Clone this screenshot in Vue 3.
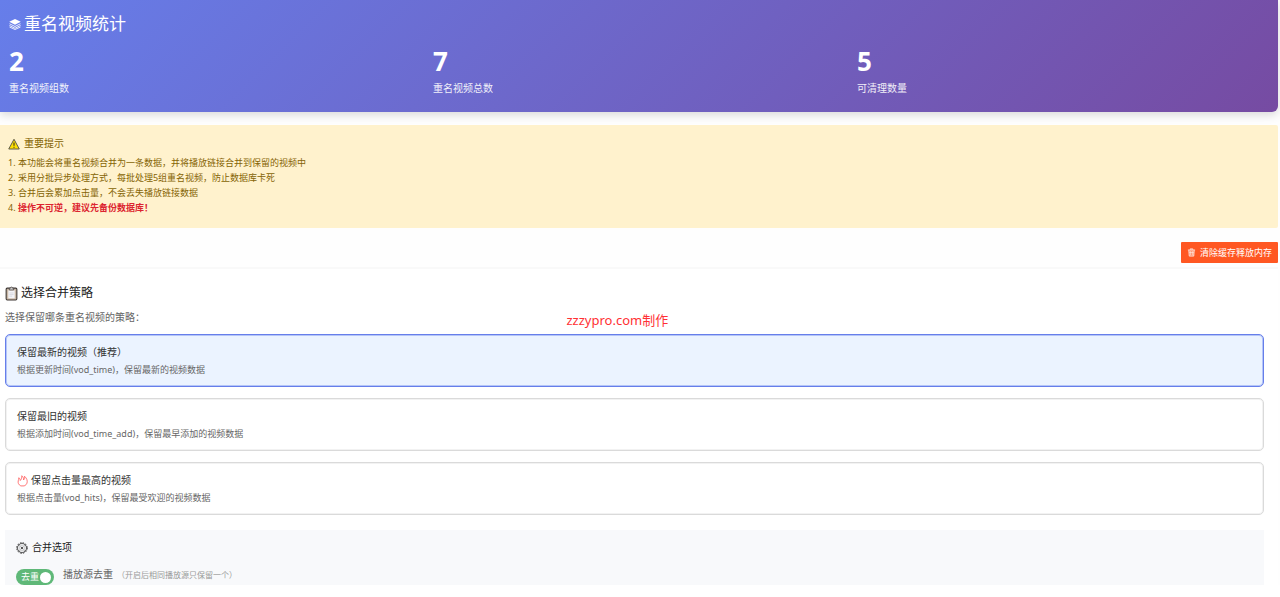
<script setup>
import { ref } from 'vue'

const stats = [
  { value: 2, label: '重名视频组数' },
  { value: 7, label: '重名视频总数' },
  { value: 5, label: '可清理数量' },
]

const notes = [
  { text: '本功能会将重名视频合并为一条数据，并将播放链接合并到保留的视频中' },
  { text: '采用分批异步处理方式，每批处理5组重名视频，防止数据库卡死' },
  { text: '合并后会累加点击量，不会丢失播放链接数据' },
  { text: '操作不可逆，建议先备份数据库！', danger: true },
]

const strategies = [
  { id: 'newest', title: '保留最新的视频（推荐）', desc: '根据更新时间(vod_time)，保留最新的视频数据' },
  { id: 'oldest', title: '保留最旧的视频', desc: '根据添加时间(vod_time_add)，保留最早添加的视频数据' },
  { id: 'hits', title: '保留点击量最高的视频', desc: '根据点击量(vod_hits)，保留最受欢迎的视频数据', hot: true },
]

const selected = ref('newest')
const dedupe = ref(true)
</script>

<template>
  <main class="page">
    <section class="stats">
      <h1 class="stats-title">
        <svg class="icon-layers" viewBox="0 0 24 24" aria-hidden="true">
          <path d="M12 2 23.500 7.500 12 13.500.500 7.500Z" fill="currentColor" />
          <path d="m1 11.500 11 5.500 11-5.500M1 15l11 5.500L23 15M1 18l11 5 11-5" fill="none" stroke="currentColor" stroke-width="1.700" />
        </svg>
        重名视频统计
      </h1>
      <div class="stats-grid">
        <div v-for="s in stats" :key="s.label">
          <div class="stat-value">{{ s.value }}</div>
          <div class="stat-label">{{ s.label }}</div>
        </div>
      </div>
    </section>

    <section class="notice">
      <h2 class="notice-title">
        <svg class="icon-warning" viewBox="0 0 24 24" aria-hidden="true">
          <path d="M12 2.500 22.500 22h-21Z" fill="#ffe000" stroke="#5c5a4c" stroke-width="2" stroke-linejoin="round" />
          <path d="M12 9v6.500M12 17.500v2" stroke="#222" stroke-width="2" />
        </svg>
        重要提示
      </h2>
      <div v-for="(n, i) in notes" :key="i" class="note">
        {{ i + 1 }}. <strong v-if="n.danger">{{ n.text }}</strong><template v-else>{{ n.text }}</template>
      </div>
    </section>

    <div class="toolbar">
      <button type="button" class="clear">
        <svg class="icon-trash" viewBox="0 0 20 20" aria-hidden="true">
          <path d="M2 4.500h16M7 4V2h6v2M4 5l1 13h10l1-13" fill="#ffb59c" fill-opacity=".6" stroke="#ffe3da" stroke-width="2" />
          <path d="M8 7v9M12 7v9M5 10h10" stroke="#ffe3da" stroke-width="1.500" />
        </svg>
        清除缓存释放内存
      </button>
    </div>

    <section class="panel">
      <h2 class="panel-title">
        <svg class="icon-clipboard" viewBox="0 0 24 28" aria-hidden="true">
          <rect x="2" y="4" width="20" height="22" rx="2" fill="#c9b8a6" stroke="#3c3532" stroke-width="2" />
          <path d="M6 8h12v15H6Z" fill="#f4f4f8" />
          <path d="M8 4h2a2 2 0 0 1 4 0h2v3.500H8Z" fill="#ccc" stroke="#4a4341" stroke-width="1.400" />
          <path d="M8 13h8M8 16h8M8 19h5" stroke="#c4c4cc" />
        </svg>
        选择合并策略
      </h2>
      <div class="intro">
        <p>选择保留哪条重名视频的策略：</p>
        <span class="watermark">zzzypro.com制作</span>
      </div>

      <div class="strategies" role="radiogroup" aria-label="选择合并策略">
        <label v-for="s in strategies" :key="s.id" class="strategy" :class="{ active: selected === s.id }">
          <input v-model="selected" class="hidden-input" type="radio" name="strategy" :value="s.id">
          <span class="strategy-title">
            <svg v-if="s.hot" class="icon-fire" viewBox="0 0 22 24" fill="none" stroke="#ff6060" stroke-width="1.700" stroke-linejoin="round" stroke-linecap="round" aria-hidden="true">
              <path d="M7 21.500C3 19.500 1.500 15.500 2.500 11.500 3 9.500 4 8 3.500 5.500 5.500 6.500 6.500 8.500 6.500 11 9 8.500 10 5 9.500 1.500c3 2 4 5 3.500 8.500 1.500-1.500 2.500-4 2-7.500 4.500 4 6.500 9 5 13.500-.8 2.500-2.500 4.500-5 5.500Z" />
            </svg>
            {{ s.title }}
          </span>
          <span class="strategy-desc">{{ s.desc }}</span>
        </label>
      </div>

      <div class="options">
        <h3 class="options-title">
          <svg class="icon-gear" viewBox="0 0 24 24" fill="none" stroke="#333" aria-hidden="true">
            <circle cx="12" cy="12" r="10.500" stroke-width="2" stroke-dasharray="3.200 2.298" />
            <circle cx="12" cy="12" r="9" stroke-width="1.600" />
            <circle cx="12" cy="12" r="5.500" stroke="#aaa" />
            <circle cx="12" cy="12" r="1.800" fill="#333" />
            <path d="m6 6 3.500 3.500M18 6l-3.500 3.500M6 18l3.500-3.500M18 18l-3.500-3.500" stroke="#888" />
          </svg>
          合并选项
        </h3>
        <label class="option">
          <input v-model="dedupe" class="hidden-input" type="checkbox">
          <span class="switch" :class="{ off: !dedupe }">去重<i class="knob"></i></span>
          <span class="option-label">播放源去重</span>
          <small>（开启后相同播放源只保留一个）</small>
        </label>
      </div>
    </section>
  </main>
</template>

<style>
body {
  background: #fff;
}
</style>

<style scoped>
* {
  box-sizing: border-box;
}

h1, h2, h3, p {
  margin: 0;
  font-weight: 400;
}

.page {
  height: calc(100vh - 12px);
  overflow: hidden;
  padding-right: 2px;
  background: #fefefe;
  color: #333;
  font-family: "Noto Sans", "Noto Sans CJK SC", sans-serif;
  font-size: 10px;
}

.stats {
  padding: 11px 0 15px 9px;
  border-radius: 0 0 6px 0;
  background: linear-gradient(135deg, #667eea 0%, #764ba2 100%);
  box-shadow: 0 3px 10px rgba(0, 0, 0, 0.15);
  color: #fff;
}

.stats-title {
  display: flex;
  align-items: center;
  gap: 3px;
  font-size: 17px;
  line-height: 25px;
}

.icon-layers {
  width: 12px;
  height: 12px;
}

.stats-grid {
  display: grid;
  grid-template-columns: repeat(3, 1fr);
  gap: 3px;
  padding-top: 7px;
}

.stat-value {
  font-size: 26px;
  font-weight: 700;
  line-height: 36px;
}

.stat-label {
  line-height: 18px;
  opacity: 0.9;
}

.notice {
  margin-top: 13px;
  padding: 10px 8px 13px;
  border-radius: 0 2px 2px 0;
  background: #fff2cd;
  color: #856404;
}

.notice-title {
  display: flex;
  align-items: center;
  gap: 4px;
  margin-bottom: 3px;
  font-size: 10px;
  line-height: 17px;
}

.icon-warning {
  width: 12px;
  height: 12px;
}

.note {
  font-size: 9px;
  line-height: 15px;
}

.note strong {
  color: #dc2430;
}

.toolbar {
  display: flex;
  justify-content: flex-end;
  padding: 14px 0 4px;
}

.clear {
  display: flex;
  align-items: center;
  gap: 4px;
  height: 21px;
  padding: 0 6px;
  border: 0;
  border-radius: 1px;
  background: #ff5722;
  color: #fff;
  font: inherit;
  font-size: 9px;
}

.icon-trash {
  width: 9px;
  height: 9px;
}

.panel {
  padding: 14px 14px 0 5px;
  border-top: 2px solid #f9f9f9;
  background: #fff;
}

.panel-title {
  display: flex;
  align-items: center;
  gap: 3px;
  color: #222;
  font-size: 12px;
  line-height: 20px;
}

.icon-clipboard {
  width: 13px;
  height: 15px;
}

.intro {
  position: relative;
  padding: 6px 0 8px;
  color: #666;
  line-height: 17px;
}

.watermark {
  position: absolute;
  top: 7px;
  left: 44.600%;
  color: #ff3034;
  font-size: 13px;
  line-height: 20px;
}

.strategies {
  display: grid;
  gap: 11px;
}

.strategy {
  display: block;
  position: relative;
  padding: 9px 10px 8px 11px;
  border: 1px solid #dadada;
  border-radius: 5px;
  box-shadow: inset 0 0 0 1px #f2f2f2;
  background: #fff;
  cursor: pointer;
}

.strategy.active {
  border-color: #667eea;
  box-shadow: inset 0 0 0 1px #b4c5f8;
  background: #ebf3ff;
}

.hidden-input {
  position: absolute;
  width: 1px;
  height: 1px;
  margin: 0;
  opacity: 0;
}

.strategy-title {
  display: flex;
  align-items: center;
  gap: 3px;
  line-height: 17px;
}

.icon-fire {
  width: 11px;
  height: 12px;
}

.strategy-desc {
  display: block;
  color: #666;
  font-size: 9px;
  line-height: 17px;
}

.options {
  margin-top: 15px;
  padding: 9px 11px 12px;
  background: #f8f9fb;
}

.options-title {
  display: flex;
  align-items: center;
  gap: 4px;
  color: #222;
  font-size: 10px;
  line-height: 17px;
}

.icon-gear {
  width: 12px;
  height: 12px;
}

.option {
  display: flex;
  align-items: flex-start;
  position: relative;
  padding-top: 10px;
  color: #666;
  line-height: 17px;
}

.switch {
  display: flex;
  align-items: center;
  justify-content: space-between;
  width: 38px;
  height: 16px;
  margin: 3px 9px 0 0;
  padding: 0 3px 0 5px;
  border-radius: 8px;
  background: #5fb878;
  color: #fff;
  font-size: 9px;
  line-height: 16px;
}

.switch.off {
  background: #bbb;
}

.knob {
  flex: none;
  width: 11px;
  height: 11px;
  border-radius: 50%;
  background: #fff;
}

.option small {
  margin-left: 4px;
  color: #999;
  font-size: 8px;
}
</style>
